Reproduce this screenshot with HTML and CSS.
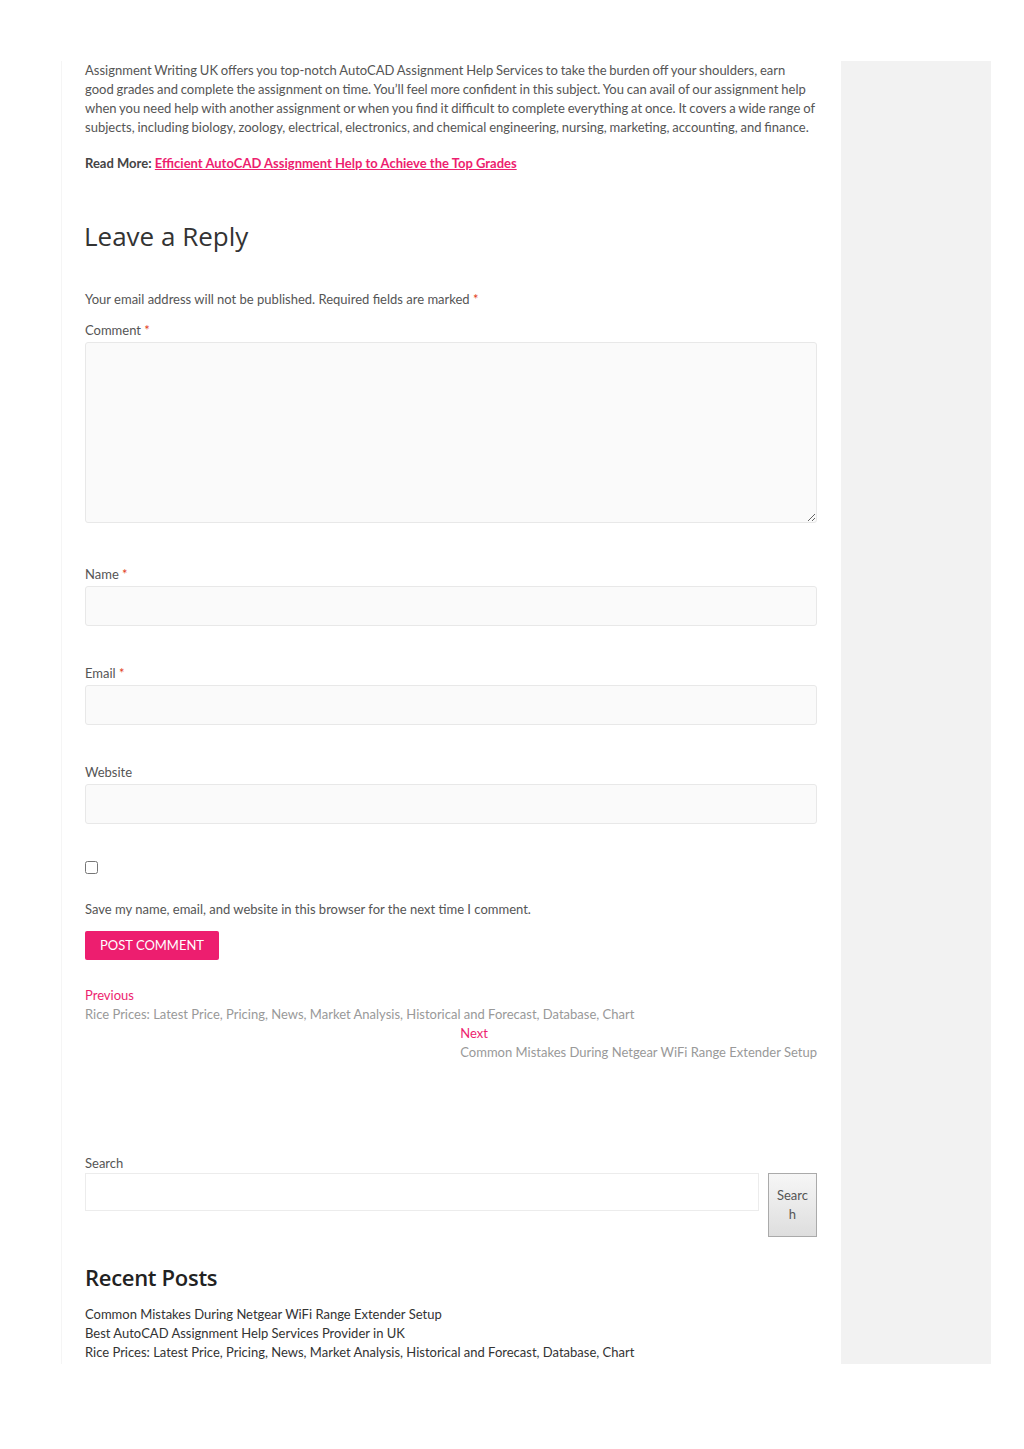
FILE: index.html
```html
<!DOCTYPE html>
<html>
<head>
    <title>AutoCAD Assignment Help</title>
    <link rel="stylesheet" href="styles.css">
</head>
<body>
    <div class="wrap">
        <main class="content">
            <p class="intro">Assignment Writing UK offers you top-notch AutoCAD Assignment Help Services to take the burden off your shoulders, earn<br> good grades and complete the assignment on time. You’ll feel more confident in this subject. You can avail of our assignment help when you need help with another assignment or when you find it difficult to complete everything at once. It covers a wide range of<br> subjects, including biology, zoology, electrical, electronics, and chemical engineering, nursing, marketing, accounting, and finance.</p>

            <p class="read-more"><strong>Read More:</strong> <a href="#">Efficient AutoCAD Assignment Help to Achieve the Top Grades</a></p>

            <section class="respond">
                <h3 class="reply-title">Leave a Reply</h3>
                <form class="comment-form">
                    <p class="notes">Your email address will not be published. Required fields are marked <span class="req">*</span></p>

                    <div class="field field-comment">
                        <label for="comment">Comment <span class="req">*</span></label>
                        <textarea id="comment"></textarea>
                    </div>

                    <div class="field">
                        <label for="author">Name <span class="req">*</span></label>
                        <input type="text" id="author">
                    </div>

                    <div class="field">
                        <label for="email">Email <span class="req">*</span></label>
                        <input type="text" id="email">
                    </div>

                    <div class="field">
                        <label for="url">Website</label>
                        <input type="text" id="url">
                    </div>

                    <div class="cookies">
                        <input type="checkbox" id="cookies">
                        <label for="cookies">Save my name, email, and website in this browser for the next time I comment.</label>
                    </div>

                    <button type="button" class="submit">Post Comment</button>
                </form>
            </section>

            <nav class="post-nav">
                <a href="#" class="nav-previous">
                    <span class="nav-label">Previous</span>
                    <span class="nav-title">Rice Prices: Latest Price, Pricing, News, Market Analysis, Historical and Forecast, Database, Chart</span>
                </a>
                <a href="#" class="nav-next">
                    <span class="nav-label">Next</span>
                    <span class="nav-title">Common Mistakes During Netgear WiFi Range Extender Setup</span>
                </a>
            </nav>

            <div class="widget widget-search">
                <label for="s">Search</label>
                <div class="search-row">
                    <input type="text" id="s">
                    <button type="button">Search</button>
                </div>
            </div>

            <div class="widget widget-recent">
                <h2>Recent Posts</h2>
                <ul>
                    <li><a href="#">Common Mistakes During Netgear WiFi Range Extender Setup</a></li>
                    <li><a href="#">Best AutoCAD Assignment Help Services Provider in UK</a></li>
                    <li><a href="#">Rice Prices: Latest Price, Pricing, News, Market Analysis, Historical and Forecast, Database, Chart</a></li>
                </ul>
            </div>
        </main>

        <aside class="sidebar"></aside>
    </div>
</body>
</html>
```

FILE: styles.css
```css
body {
    font-family: Lato, "Open Sans", sans-serif;
    font-size: 13px;
    line-height: 19px;
    color: #555;
    background-color: #fff;
    margin: 0;
}

a {
    color: #ed1e6f;
    text-decoration: none;
}

.wrap {
    display: flex;
    width: 930px;
    margin: 61px 0 86px 61px;
}

.content {
    width: 780px;
    padding: 0 24px 2px 23px;
    border-left: 1px solid #f5f5f5;
    box-sizing: border-box;
}

.sidebar {
    width: 150px;
    background-color: #f2f2f2;
}

p {
    margin: 0;
}

.intro {
    word-spacing: -0.5px;
    margin-bottom: 17px;
}

.read-more {
    margin-bottom: 46px;
}

.read-more strong {
    color: #444;
}

.read-more a {
    font-weight: bold;
    text-decoration: underline;
}

.reply-title {
    font-family: "Open Sans", sans-serif;
    font-size: 26px;
    font-weight: normal;
    line-height: 34px;
    color: #333;
    margin: 0 0 37px -1px;
}

.notes {
    margin-bottom: 12px;
}

.req {
    color: #e2401c;
}

.field {
    margin-bottom: 38px;
}

.field-comment {
    margin-bottom: 42px;
}

.field label {
    display: block;
    margin-bottom: 2px;
}

.field input,
.field textarea {
    display: block;
    width: 100%;
    height: 40px;
    box-sizing: border-box;
    border: 1px solid #e8e8e8;
    border-radius: 3px;
    background-color: #fafafa;
    font: inherit;
    padding: 8px 10px;
    margin: 0;
}

.field textarea {
    height: 181px;
    resize: vertical;
}

.cookies input {
    display: block;
    width: 13px;
    height: 13px;
    margin: -1px 0 26px;
}

.cookies {
    margin-bottom: 12px;
}

.submit {
    font-family: Lato, sans-serif;
    font-size: 13px;
    line-height: 19px;
    text-transform: uppercase;
    color: #fff;
    background-color: #ed1e6f;
    border: none;
    border-radius: 2px;
    padding: 5px 15px;
    cursor: pointer;
}

.post-nav {
    display: flex;
    flex-direction: column;
    margin-top: 26px;
}

.post-nav a {
    display: block;
}

.nav-next {
    align-self: flex-end;
}

.nav-label {
    display: block;
}

.nav-title {
    display: block;
    color: #999;
}

.widget-search {
    margin-top: 92px;
}

.widget-search label {
    display: block;
}

.search-row {
    display: flex;
    align-items: flex-start;
    gap: 9px;
}

.search-row input {
    flex: 1;
    height: 38px;
    box-sizing: border-box;
    border: 1px solid #ececec;
    background-color: #fff;
    margin: 0;
}

.search-row button {
    width: 49px;
    padding: 12px 6px;
    font-family: Lato, sans-serif;
    font-size: 13px;
    line-height: 19px;
    color: #555;
    border: 1px solid #aaa;
    background: linear-gradient(#f6f6f6, #dedede);
    word-break: break-all;
}

.widget-recent {
    margin-top: 25px;
}

.widget-recent h2 {
    font-family: "Open Sans", sans-serif;
    font-size: 22px;
    font-weight: 600;
    line-height: 30px;
    letter-spacing: -0.3px;
    color: #222;
    margin: 0 0 13px;
}

.widget-recent ul {
    list-style: none;
    margin: 0;
    padding: 0;
}

.widget-recent a {
    color: #333;
}
```
